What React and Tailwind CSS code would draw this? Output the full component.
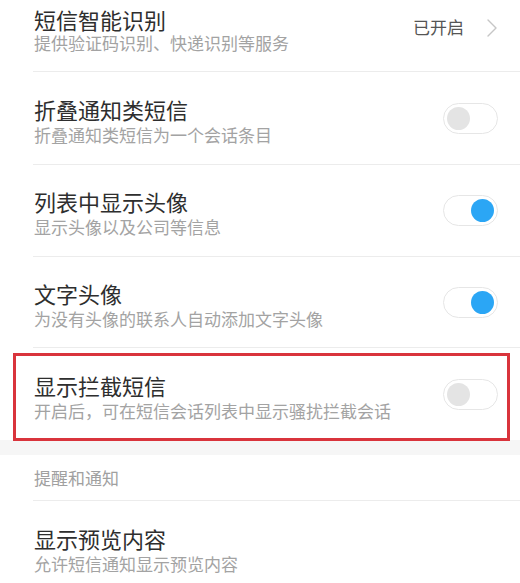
const font = { fontFamily: '"Noto Sans CJK SC", "Noto Sans", sans-serif' }

function Toggle({ on }) {
  return (
    <div className="flex h-[31px] w-[55px] shrink-0 items-center rounded-full border border-[#e6e6e6] bg-white px-[3px]">
      {on ? (
        <div className="ml-auto h-[23px] w-[23px] rounded-full bg-[#2ba6f5]" />
      ) : (
        <div className="h-[23px] w-[23px] rounded-full bg-[#e4e4e4]" />
      )}
    </div>
  )
}

function Row({ title, subtitle, right, last, height = 'h-[92px]' }) {
  return (
    <div
      className={`ml-[33px] flex ${height} items-center justify-between pl-px pr-[22px] ${
        last ? '' : 'border-b border-[#ececec]'
      }`}
    >
      <div className="flex flex-col pt-[6px]">
        <p className="text-[22px] leading-[26px] text-[#2e2e2e]">{title}</p>
        <p className="mt-px text-[17px] leading-[24px] text-[#a3a3a3]">{subtitle}</p>
      </div>
      {right}
    </div>
  )
}

const toggles = [
  { title: '折叠通知类短信', subtitle: '折叠通知类短信为一个会话条目', on: false, height: 'h-[93px]' },
  { title: '列表中显示头像', subtitle: '显示头像以及公司等信息', on: true, height: 'h-[92px]' },
  { title: '文字头像', subtitle: '为没有头像的联系人自动添加文字头像', on: true, height: 'h-[91px]' },
]

export default function App() {
  return (
    <div className="relative h-[583px] w-[520px] overflow-hidden bg-white" style={font}>
      <div className="ml-[33px] flex h-[72px] items-start justify-between border-b border-[#ececec] pl-px pr-[23px]">
        <div className="flex flex-col pt-[6px]">
          <p className="text-[22px] leading-[26px] text-[#2e2e2e]">短信智能识别</p>
          <p className="text-[17px] leading-[22px] text-[#a3a3a3]">提供验证码识别、快递识别等服务</p>
        </div>
        <div className="mt-[15px] flex items-center gap-[23px]">
          <span className="text-[17px] leading-[24px] text-[#555]">已开启</span>
          <svg width="10" height="18" viewBox="0 0 10 18" fill="none" className="mt-[2px]">
            <polyline points="1,1 9,9 1,17" stroke="#c6c6c6" strokeWidth="1.4" strokeLinejoin="round" strokeLinecap="round" />
          </svg>
        </div>
      </div>

      {toggles.map((t) => (
        <Row key={t.title} title={t.title} subtitle={t.subtitle} height={t.height} right={<Toggle on={t.on} />} />
      ))}

      <Row
        title="显示拦截短信"
        subtitle="开启后，可在短信会话列表中显示骚扰拦截会话"
        right={<Toggle on={false} />}
        last
      />

      <div className="h-[15px] bg-[#f6f6f6]" />

      <div className="ml-[33px] flex h-[46px] items-center border-b border-[#ececec] pl-px">
        <span className="text-[17px] leading-[24px] text-[#a0a0a0]">提醒和通知</span>
      </div>

      <Row title="显示预览内容" subtitle="允许短信通知显示预览内容" right={null} last />

      <div className="absolute left-[13px] top-[353px] h-[88px] w-[497px] border-[3px] border-[#d9343c]" />
    </div>
  )
}
